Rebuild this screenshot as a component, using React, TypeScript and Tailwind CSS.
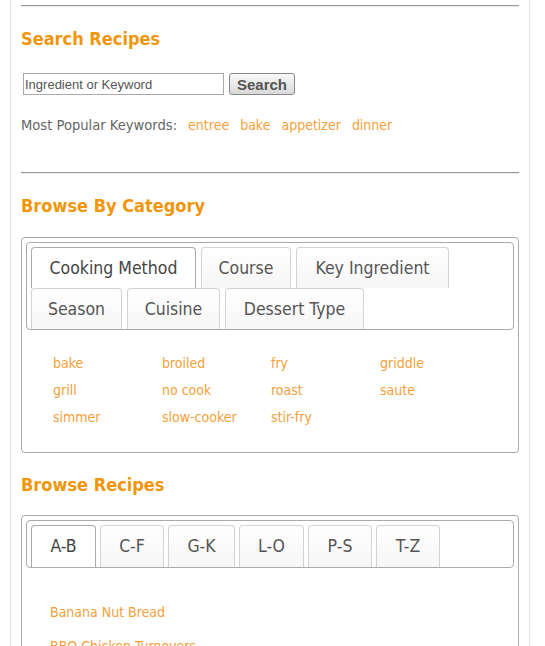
const categoryTabs = [
  { label: "Cooking Method", width: "w-[165px]", active: true },
  { label: "Course", width: "w-[90px]", active: false },
  { label: "Key Ingredient", width: "w-[153px]", active: false },
  { label: "Season", width: "w-[91px]", active: false },
  { label: "Cuisine", width: "w-[93px]", active: false },
  { label: "Dessert Type", width: "w-[139px]", active: false },
];

const letterTabs = [
  { label: "A-B", width: "w-[65px]", active: true },
  { label: "C-F", width: "w-[64px]", active: false },
  { label: "G-K", width: "w-[67px]", active: false },
  { label: "L-O", width: "w-[65px]", active: false },
  { label: "P-S", width: "w-[64px]", active: false },
  { label: "T-Z", width: "w-[64px]", active: false },
];

const methods = [
  "bake",
  "broiled",
  "fry",
  "griddle",
  "grill",
  "no cook",
  "roast",
  "saute",
  "simmer",
  "slow-cooker",
  "stir-fry",
];

const keywords = ["entree", "bake", "appetizer", "dinner"];

const recipes = ["Banana Nut Bread", "BBQ Chicken Turnovers"];

function Divider() {
  return <div className="h-[2px] border-t border-[#999] border-b border-b-[#e8e8e8]" />;
}

function Heading({ children }: { children: string }) {
  return (
    <h2 className="text-[18px] leading-[20px] font-bold text-[#f0960a]">
      {children}
    </h2>
  );
}

function Tab({
  label,
  width,
  active,
  height,
}: {
  label: string;
  width: string;
  active: boolean;
  height: string;
}) {
  return (
    <div
      className={
        active
          ? `${width} ${height} flex items-center justify-center rounded-t-[4px] border border-b-0 border-[#aaa] bg-white text-[17.5px] text-[#444]`
          : `${width} ${height} flex items-center justify-center rounded-t-[4px] border border-b-0 border-[#d3d3d3] bg-linear-to-b from-white to-[#f6f6f6] text-[17.5px] text-[#555]`
      }
    >
      {label}
    </div>
  );
}

export default function App() {
  return (
    <div className="min-h-[646px] bg-white font-['DejaVu_Sans',Verdana,sans-serif] [font-stretch:condensed]">
      <div className="ml-[10px] w-[520px] min-h-[646px] border-x border-[#e3e3e3] px-[10px] pt-[5px]">
        <Divider />

        <div className="mt-[22px]">
          <Heading>Search Recipes</Heading>
        </div>

        <div className="mt-[24px] flex items-center gap-[5px] pl-[2px]">
          <input
            type="text"
            defaultValue="Ingredient or Keyword"
            className="h-[22px] w-[201px] border border-[#a9a9a9] px-[1px] font-['Liberation_Sans',Arial,sans-serif] text-[13px] text-[#555] outline-none"
          />
          <button className="h-[22px] w-[66px] rounded-[3px] border border-[#888] bg-linear-to-b from-[#f8f8f8] to-[#d9d9d9] font-['Liberation_Sans',Arial,sans-serif] text-[15px] font-bold text-[#555]">
            Search
          </button>
        </div>

        <div className="mt-[21px] flex items-center text-[14px] leading-[18px]">
          <span className="text-[14.6px] text-[#666]">Most Popular Keywords:</span>
          <div className="ml-[11px] flex gap-[11px]">
            {keywords.map((k) => (
              <a key={k} href="#" className="text-[#f5a03a]">
                {k}
              </a>
            ))}
          </div>
        </div>

        <div className="mt-[38px]">
          <Divider />
        </div>

        <div className="mt-[22px]">
          <Heading>Browse By Category</Heading>
        </div>

        <div className="mt-[21px] rounded-[4px] border border-[#aaa] p-[4px]">
          <div className="flex flex-wrap gap-x-[5px] rounded-[4px] border border-[#aaa] px-[4px] pt-[4px]">
            {categoryTabs.map((t) => (
              <Tab key={t.label} {...t} height="h-[41px]" />
            ))}
          </div>

          <div className="grid grid-cols-[109px_109px_109px_109px] gap-y-[9px] pt-[24px] pb-[22px] pl-[27px] text-[14px] leading-[18px]">
            {methods.map((m) => (
              <a key={m} href="#" className="text-[#f5a03a]">
                {m}
              </a>
            ))}
          </div>
        </div>

        <div className="mt-[22px]">
          <Heading>Browse Recipes</Heading>
        </div>

        <div className="mt-[20px] rounded-[4px] border border-[#aaa] p-[4px]">
          <div className="flex gap-x-[4px] rounded-[4px] border border-[#aaa] px-[4px] pt-[4px]">
            {letterTabs.map((t) => (
              <div key={t.label} className={t.active ? "-mb-px" : ""}>
                <Tab {...t} height="h-[42px]" />
              </div>
            ))}
          </div>

          <div className="flex flex-col gap-y-[16px] pt-[35px] pl-[24px] text-[14px] leading-[18px]">
            {recipes.map((r) => (
              <a key={r} href="#" className="text-[#f5a03a]">
                {r}
              </a>
            ))}
          </div>
        </div>
      </div>
    </div>
  );
}
